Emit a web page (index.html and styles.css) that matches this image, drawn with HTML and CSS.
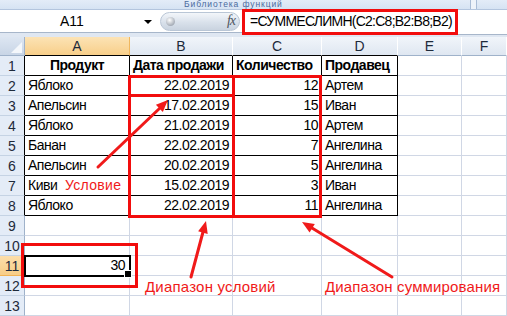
FILE: index.html
```html
<!DOCTYPE html>
<html lang="ru">
<head>
<meta charset="utf-8">
<link rel="stylesheet" href="styles.css">
</head>
<body>
<div class="app">
  <div class="ribbon">
    <span class="group-label">Библиотека функций</span>
    <span class="rsep"></span>
  </div>
  <div class="fbar">
    <div class="namebox"><span class="nb-text">A11</span><span class="dd"></span></div>
    <div class="fxzone">
      <div class="pill"><span class="dot"></span><span class="fx">fx</span></div>
    </div>
    <div class="formula">=СУММЕСЛИМН(C2:C8;B2:B8;B2)</div>
    <div class="frest"></div>
  </div>
  <div class="sheet">
    <div class="corner"><span class="tri"></span></div>
    <div class="ch sel-h tb">A</div><div class="ch tb">B</div><div class="ch tb">C</div><div class="ch tb">D</div><div class="ch">E</div><div class="ch">F</div>

    <div class="rh tb">1</div><div class="c t b ctr">Продукт</div><div class="c t b">Дата продажи</div><div class="c t b">Количество</div><div class="c t b">Продавец</div><div class="c"></div><div class="c"></div>
    <div class="rh tb">2</div><div class="c t">Яблоко</div><div class="c t r">22.02.2019</div><div class="c t r">12</div><div class="c t">Артем</div><div class="c"></div><div class="c"></div>
    <div class="rh tb">3</div><div class="c t">Апельсин</div><div class="c t r">17.02.2019</div><div class="c t r">15</div><div class="c t">Иван</div><div class="c"></div><div class="c"></div>
    <div class="rh tb">4</div><div class="c t">Яблоко</div><div class="c t r">21.02.2019</div><div class="c t r">10</div><div class="c t">Артем</div><div class="c"></div><div class="c"></div>
    <div class="rh tb">5</div><div class="c t">Банан</div><div class="c t r">22.02.2019</div><div class="c t r">7</div><div class="c t">Ангелина</div><div class="c"></div><div class="c"></div>
    <div class="rh tb">6</div><div class="c t">Апельсин</div><div class="c t r">20.02.2019</div><div class="c t r">5</div><div class="c t">Ангелина</div><div class="c"></div><div class="c"></div>
    <div class="rh tb">7</div><div class="c t">Киви</div><div class="c t r">15.02.2019</div><div class="c t r">3</div><div class="c t">Иван</div><div class="c"></div><div class="c"></div>
    <div class="rh tb">8</div><div class="c t">Яблоко</div><div class="c t r">22.02.2019</div><div class="c t r">11</div><div class="c t">Ангелина</div><div class="c"></div><div class="c"></div>
    <div class="rh">9</div><div class="c"></div><div class="c"></div><div class="c"></div><div class="c"></div><div class="c"></div><div class="c"></div>
    <div class="rh">10</div><div class="c"></div><div class="c"></div><div class="c"></div><div class="c"></div><div class="c"></div><div class="c"></div>
    <div class="rh sel-h">11</div><div class="c r sel">30</div><div class="c"></div><div class="c"></div><div class="c"></div><div class="c"></div><div class="c"></div>
    <div class="rh">12</div><div class="c"></div><div class="c"></div><div class="c"></div><div class="c"></div><div class="c"></div><div class="c"></div>
    <div class="rh">13</div><div class="c"></div><div class="c"></div><div class="c"></div><div class="c"></div><div class="c"></div><div class="c"></div>
  </div>

  <div class="rbox box-b"></div>
  <div class="rbox box-b2"></div>
  <div class="rbox box-c"></div>
  <div class="rbox box-a11"></div>

  <svg class="arrows" width="507" height="316" viewBox="0 0 507 316">
    <g stroke="#f01a1a" stroke-width="3" stroke-linecap="round" fill="none">
      <line x1="98" y1="167" x2="160" y2="108"/>
      <line x1="191" y1="277" x2="203" y2="232"/>
      <line x1="392" y1="277" x2="312" y2="228"/>
    </g>
    <g fill="#f01a1a">
      <polygon points="168,100 162.8,111.9 155.9,104.7"/>
      <polygon points="206,221 207.7,233.9 198.1,231.3"/>
      <polygon points="302,222 314.8,224 309.6,232.6"/>
    </g>
  </svg>

  <span class="note note-cond">Условие</span>
  <span class="note note-range">Диапазон условий</span>
  <span class="note note-sum">Диапазон суммирования</span>
</div>
</body>
</html>
```

FILE: styles.css
```css
* { box-sizing: border-box; }
html, body { margin: 0; padding: 0; }
body {
  width: 507px;
  height: 316px;
  overflow: hidden;
  background: #fff;
  font-family: "Liberation Sans", Arial, sans-serif;
}
.app {
  position: relative;
  width: 507px;
  height: 316px;
  overflow: hidden;
}

/* ribbon strip */
.ribbon {
  height: 10px;
  background: linear-gradient(#e3ecf8, #d6e3f3);
  border-bottom: 1px solid #b3c5de;
  display: flex;
  align-items: center;
}
.group-label {
  font-size: 8.5px;
  color: #4a6a9e;
  line-height: 9px;
  margin-left: 184px;
  letter-spacing: 0.9px;
  width: 286px;
}
.rsep {
  width: 7px;
  height: 9px;
  border-left: 1px solid #a9bcd6;
  border-right: 1px solid #a9bcd6;
  background: #eef3fa;
}

/* formula bar */
.fbar {
  height: 27px;
  display: flex;
  align-items: flex-start;
  background: #dfe7f2;
}
.namebox {
  width: 158px;
  height: 23px;
  background: #fff;
  border-bottom: 1px solid #a7b6ca;
  display: flex;
  align-items: center;
  font-size: 14px;
  color: #000;
}
.nb-text {
  margin-left: 60px;
  flex: 1;
}
.dd {
  width: 0;
  height: 0;
  border-left: 4px solid transparent;
  border-right: 4px solid transparent;
  border-top: 4px solid #000;
  margin-right: 6px;
  margin-top: 1px;
}
.fxzone {
  width: 84px;
  height: 23px;
  background: #fff;
  border-bottom: 1px solid #a7b6ca;
  display: flex;
  align-items: center;
  padding-left: 2px;
}
.pill {
  width: 80px;
  height: 19px;
  border-radius: 10px;
  border: 1px solid #b9c6d6;
  background: linear-gradient(#f3f6fa, #d9e1eb 55%, #c9d3df);
  display: flex;
  align-items: center;
  justify-content: space-between;
  padding: 0 4px 0 5px;
}
.dot {
  width: 9px;
  height: 9px;
  border-radius: 50%;
  background: radial-gradient(circle at 40% 35%, #ffffff, #a6adb7 70%);
}
.fx {
  font-family: "Liberation Serif", serif;
  font-style: italic;
  font-size: 14px;
  color: #4e5560;
  letter-spacing: -1px;
}
.formula {
  width: 216px;
  height: 26px;
  margin-top: -1px;
  border: 3px solid #f20d0d;
  background: #fff;
  font-size: 14px;
  letter-spacing: -0.75px;
  line-height: 19px;
  padding-left: 5px;
  color: #000;
  white-space: nowrap;
}
.frest {
  flex: 1;
  height: 25px;
  background: #fff;
  border-bottom: 1px solid #a7b6ca;
}

/* sheet */
.sheet {
  display: grid;
  grid-template-columns: 25px 105px 103px 89px 76px 64px 45px;
  grid-template-rows: 19px repeat(13, 20px);
  font-size: 14px;
  letter-spacing: -0.5px;
  color: #000;
}
.corner {
  background: linear-gradient(#dde6f2, #c8d5e6);
  border-right: 1px solid #9fb2ca;
  border-bottom: 1px solid #9fb2ca;
  position: relative;
}
.tri {
  position: absolute;
  right: 2px;
  bottom: 2px;
  width: 0;
  height: 0;
  border-left: 11px solid transparent;
  border-bottom: 11px solid #f4f7fb;
}
.ch {
  background: linear-gradient(#f1f5fa, #dfe7f1);
  border-right: 1px solid #fff;
  border-bottom: 1px solid #9fb2ca;
  display: flex;
  align-items: center;
  justify-content: center;
  font-size: 14px;
  letter-spacing: 0;
  color: #1e2a3a;
}
.ch.sel-h {
  background: linear-gradient(#fce3b5, #f8cf8a);
  border-right: 1px solid #f0b75e;
  border-bottom: 1px solid #f2b354;
}
.rh {
  background: #e4ecf7;
  border-right: 1px solid #9fb2ca;
  border-bottom: 1px solid #c5d3e4;
  display: flex;
  align-items: center;
  justify-content: center;
  font-size: 14px;
  letter-spacing: 0;
  color: #1e2a3a;
}
.rh.tb { border-right-color: #000; }
.rh.sel-h {
  background: linear-gradient(#fcdeaa, #f7cd87);
  border-bottom-color: #f2b354;
}
.ch.tb { border-bottom-color: #000; }
.c {
  border-right: 1px solid #d0d7e5;
  border-bottom: 1px solid #d0d7e5;
  display: flex;
  align-items: flex-end;
  padding: 0 3px 1px 3px;
  line-height: 17px;
  white-space: nowrap;
}
.c.t {
  border-right-color: #000;
  border-bottom-color: #000;
}
.c.b { font-weight: bold; }
.c.ctr { justify-content: center; }
.c.r { justify-content: flex-end; }
.c.sel {
  position: relative;
  outline: 2px solid #000;
  outline-offset: -1px;
  padding-right: 4px;
}
.c.sel::after {
  content: "";
  position: absolute;
  right: -3px;
  bottom: -3px;
  width: 6px;
  height: 6px;
  background: #000;
  border: 1px solid #fff;
}

/* overlays */
.rbox {
  position: absolute;
  border: 3px solid #f20d0d;
}
.box-b { left: 128px; top: 75px; width: 107px; height: 143px; }
.box-b2 { left: 128px; top: 75px; width: 107px; height: 22px; }
.box-c { left: 232px; top: 75px; width: 90px; height: 143px; }
.box-a11 { left: 21px; top: 243px; width: 117px; height: 45px; }

.arrows {
  position: absolute;
  left: 0;
  top: 0;
}
.note {
  position: absolute;
  color: #f01a1a;
  white-space: nowrap;
}
.note-cond { left: 65px; top: 177px; font-size: 14px; letter-spacing: 0.3px; }
.note-range { left: 145px; top: 278px; font-size: 15px; letter-spacing: 0.2px; }
.note-sum { left: 325px; top: 278px; font-size: 15px; letter-spacing: 0.15px; }
```
